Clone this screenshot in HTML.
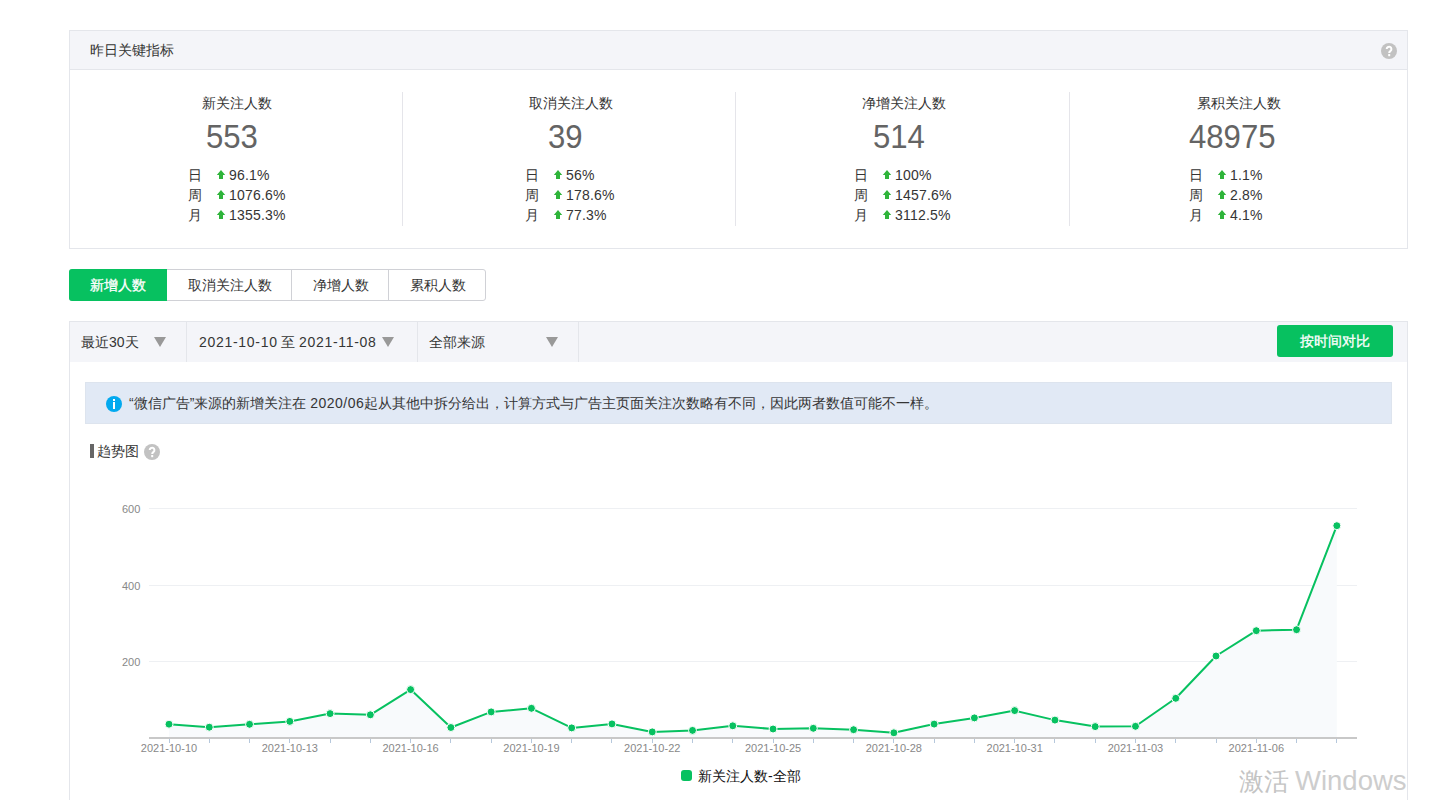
<!DOCTYPE html>
<html><head><meta charset="utf-8">
<style>
html,body{margin:0;padding:0;background:#fff;}
body{width:1437px;height:800px;overflow:hidden;position:relative;font-family:"Liberation Sans",sans-serif;}
.t{position:absolute;white-space:nowrap;}
.abs{position:absolute;}
.arrow{position:absolute;width:10px;height:10px;}
.arrow svg{display:block}
</style></head><body>
<div class="abs" style="left:69px;top:30px;width:1337px;height:217px;border:1px solid #e4e6eb;background:#fff"></div>
<div class="abs" style="left:70px;top:31px;width:1337px;height:38px;background:#f4f5f9;border-bottom:1px solid #e4e6eb;width:1337px"></div>
<div class="t" style="left:90px;top:43px;font-size:14px;line-height:14px;color:#353535;">昨日关键指标</div>
<svg class="abs" style="left:1381px;top:43px" width="16" height="16" viewBox="0 0 16 16"><circle cx="8" cy="8" r="8" fill="#c2c2c2"/><path d="M5.7 6.1 A2.35 2.35 0 1 1 9.5 7.9 C8.5 8.6 8.2 9 8.2 10" fill="none" stroke="#fff" stroke-width="2"/><rect x="7.2" y="11" width="2" height="2.2" fill="#fff"/></svg>
<div class="abs" style="left:402px;top:92px;width:1px;height:134px;background:#e5e5ea"></div>
<div class="abs" style="left:735px;top:92px;width:1px;height:134px;background:#e5e5ea"></div>
<div class="abs" style="left:1069px;top:92px;width:1px;height:134px;background:#e5e5ea"></div>
<div class="t" style="left:202px;top:96px;font-size:14px;line-height:14px;color:#353535;">新关注人数</div>
<div class="t" style="left:206px;top:119px;font-size:34px;line-height:34px;color:#646464;transform:scaleX(0.915);transform-origin:0 0">553</div>
<div class="t" style="left:188px;top:168px;font-size:14px;line-height:14px;color:#353535;">日</div>
<div class="arrow" style="left:216px;top:170px"><svg width="10" height="10" viewBox="0 0 10 10"><path d="M5 0 L9.2 4.9 L7 4.9 L7 9 L3 9 L3 4.9 L0.8 4.9 Z" fill="#2fb43a"/></svg></div>
<div class="t" style="left:229px;top:168px;font-size:14px;line-height:14px;color:#353535;letter-spacing:0.2px">96.1%</div>
<div class="t" style="left:188px;top:188px;font-size:14px;line-height:14px;color:#353535;">周</div>
<div class="arrow" style="left:216px;top:190px"><svg width="10" height="10" viewBox="0 0 10 10"><path d="M5 0 L9.2 4.9 L7 4.9 L7 9 L3 9 L3 4.9 L0.8 4.9 Z" fill="#2fb43a"/></svg></div>
<div class="t" style="left:229px;top:188px;font-size:14px;line-height:14px;color:#353535;letter-spacing:0.2px">1076.6%</div>
<div class="t" style="left:188px;top:208px;font-size:14px;line-height:14px;color:#353535;">月</div>
<div class="arrow" style="left:216px;top:210px"><svg width="10" height="10" viewBox="0 0 10 10"><path d="M5 0 L9.2 4.9 L7 4.9 L7 9 L3 9 L3 4.9 L0.8 4.9 Z" fill="#2fb43a"/></svg></div>
<div class="t" style="left:229px;top:208px;font-size:14px;line-height:14px;color:#353535;letter-spacing:0.2px">1355.3%</div>
<div class="t" style="left:529px;top:96px;font-size:14px;line-height:14px;color:#353535;">取消关注人数</div>
<div class="t" style="left:548px;top:119px;font-size:34px;line-height:34px;color:#646464;transform:scaleX(0.915);transform-origin:0 0">39</div>
<div class="t" style="left:525px;top:168px;font-size:14px;line-height:14px;color:#353535;">日</div>
<div class="arrow" style="left:553px;top:170px"><svg width="10" height="10" viewBox="0 0 10 10"><path d="M5 0 L9.2 4.9 L7 4.9 L7 9 L3 9 L3 4.9 L0.8 4.9 Z" fill="#2fb43a"/></svg></div>
<div class="t" style="left:566px;top:168px;font-size:14px;line-height:14px;color:#353535;letter-spacing:0.2px">56%</div>
<div class="t" style="left:525px;top:188px;font-size:14px;line-height:14px;color:#353535;">周</div>
<div class="arrow" style="left:553px;top:190px"><svg width="10" height="10" viewBox="0 0 10 10"><path d="M5 0 L9.2 4.9 L7 4.9 L7 9 L3 9 L3 4.9 L0.8 4.9 Z" fill="#2fb43a"/></svg></div>
<div class="t" style="left:566px;top:188px;font-size:14px;line-height:14px;color:#353535;letter-spacing:0.2px">178.6%</div>
<div class="t" style="left:525px;top:208px;font-size:14px;line-height:14px;color:#353535;">月</div>
<div class="arrow" style="left:553px;top:210px"><svg width="10" height="10" viewBox="0 0 10 10"><path d="M5 0 L9.2 4.9 L7 4.9 L7 9 L3 9 L3 4.9 L0.8 4.9 Z" fill="#2fb43a"/></svg></div>
<div class="t" style="left:566px;top:208px;font-size:14px;line-height:14px;color:#353535;letter-spacing:0.2px">77.3%</div>
<div class="t" style="left:862px;top:96px;font-size:14px;line-height:14px;color:#353535;">净增关注人数</div>
<div class="t" style="left:873px;top:119px;font-size:34px;line-height:34px;color:#646464;transform:scaleX(0.915);transform-origin:0 0">514</div>
<div class="t" style="left:854px;top:168px;font-size:14px;line-height:14px;color:#353535;">日</div>
<div class="arrow" style="left:882px;top:170px"><svg width="10" height="10" viewBox="0 0 10 10"><path d="M5 0 L9.2 4.9 L7 4.9 L7 9 L3 9 L3 4.9 L0.8 4.9 Z" fill="#2fb43a"/></svg></div>
<div class="t" style="left:895px;top:168px;font-size:14px;line-height:14px;color:#353535;letter-spacing:0.2px">100%</div>
<div class="t" style="left:854px;top:188px;font-size:14px;line-height:14px;color:#353535;">周</div>
<div class="arrow" style="left:882px;top:190px"><svg width="10" height="10" viewBox="0 0 10 10"><path d="M5 0 L9.2 4.9 L7 4.9 L7 9 L3 9 L3 4.9 L0.8 4.9 Z" fill="#2fb43a"/></svg></div>
<div class="t" style="left:895px;top:188px;font-size:14px;line-height:14px;color:#353535;letter-spacing:0.2px">1457.6%</div>
<div class="t" style="left:854px;top:208px;font-size:14px;line-height:14px;color:#353535;">月</div>
<div class="arrow" style="left:882px;top:210px"><svg width="10" height="10" viewBox="0 0 10 10"><path d="M5 0 L9.2 4.9 L7 4.9 L7 9 L3 9 L3 4.9 L0.8 4.9 Z" fill="#2fb43a"/></svg></div>
<div class="t" style="left:895px;top:208px;font-size:14px;line-height:14px;color:#353535;letter-spacing:0.2px">3112.5%</div>
<div class="t" style="left:1197px;top:96px;font-size:14px;line-height:14px;color:#353535;">累积关注人数</div>
<div class="t" style="left:1189px;top:119px;font-size:34px;line-height:34px;color:#646464;transform:scaleX(0.915);transform-origin:0 0">48975</div>
<div class="t" style="left:1189px;top:168px;font-size:14px;line-height:14px;color:#353535;">日</div>
<div class="arrow" style="left:1217px;top:170px"><svg width="10" height="10" viewBox="0 0 10 10"><path d="M5 0 L9.2 4.9 L7 4.9 L7 9 L3 9 L3 4.9 L0.8 4.9 Z" fill="#2fb43a"/></svg></div>
<div class="t" style="left:1230px;top:168px;font-size:14px;line-height:14px;color:#353535;letter-spacing:0.2px">1.1%</div>
<div class="t" style="left:1189px;top:188px;font-size:14px;line-height:14px;color:#353535;">周</div>
<div class="arrow" style="left:1217px;top:190px"><svg width="10" height="10" viewBox="0 0 10 10"><path d="M5 0 L9.2 4.9 L7 4.9 L7 9 L3 9 L3 4.9 L0.8 4.9 Z" fill="#2fb43a"/></svg></div>
<div class="t" style="left:1230px;top:188px;font-size:14px;line-height:14px;color:#353535;letter-spacing:0.2px">2.8%</div>
<div class="t" style="left:1189px;top:208px;font-size:14px;line-height:14px;color:#353535;">月</div>
<div class="arrow" style="left:1217px;top:210px"><svg width="10" height="10" viewBox="0 0 10 10"><path d="M5 0 L9.2 4.9 L7 4.9 L7 9 L3 9 L3 4.9 L0.8 4.9 Z" fill="#2fb43a"/></svg></div>
<div class="t" style="left:1230px;top:208px;font-size:14px;line-height:14px;color:#353535;letter-spacing:0.2px">4.1%</div>
<div class="abs" style="left:69px;top:269px;width:415px;height:30px;border:1px solid #d0d1d6;border-radius:3px;background:#fff"></div>
<div class="abs" style="left:69px;top:269px;width:98px;height:32px;background:#07c160;border-radius:3px 0 0 3px"></div>
<div class="abs" style="left:291px;top:270px;width:1px;height:30px;background:#d0d1d6"></div>
<div class="abs" style="left:388px;top:270px;width:1px;height:30px;background:#d0d1d6"></div>
<div class="t" style="left:90px;top:278px;font-size:14px;line-height:14px;color:#fff;-webkit-text-stroke:0.3px #fff">新增人数</div>
<div class="t" style="left:188px;top:278px;font-size:14px;line-height:14px;color:#353535;">取消关注人数</div>
<div class="t" style="left:313px;top:278px;font-size:14px;line-height:14px;color:#353535;">净增人数</div>
<div class="t" style="left:410px;top:278px;font-size:14px;line-height:14px;color:#353535;">累积人数</div>
<div class="abs" style="left:69px;top:321px;width:1337px;height:500px;border:1px solid #e4e6eb;background:#fff"></div>
<div class="abs" style="left:70px;top:322px;width:1337px;height:40px;background:#f4f5f9"></div>
<div class="abs" style="left:186px;top:322px;width:1px;height:40px;background:#e4e6eb"></div>
<div class="abs" style="left:417px;top:322px;width:1px;height:40px;background:#e4e6eb"></div>
<div class="abs" style="left:578px;top:322px;width:1px;height:40px;background:#e4e6eb"></div>
<div class="t" style="left:81px;top:335px;font-size:14px;line-height:14px;color:#353535;">最近30天</div>
<div class="abs" style="left:154px;top:337px;width:0;height:0;border-left:6px solid transparent;border-right:6px solid transparent;border-top:10px solid #999"></div>
<div class="t" style="left:199px;top:335px;font-size:14px;line-height:14px;color:#353535;letter-spacing:0.7px">2021-10-10</div>
<div class="t" style="left:281px;top:335px;font-size:14px;line-height:14px;color:#353535;">至</div>
<div class="t" style="left:299px;top:335px;font-size:14px;line-height:14px;color:#353535;letter-spacing:0.7px">2021-11-08</div>
<div class="abs" style="left:382px;top:337px;width:0;height:0;border-left:6px solid transparent;border-right:6px solid transparent;border-top:10px solid #999"></div>
<div class="t" style="left:429px;top:335px;font-size:14px;line-height:14px;color:#353535;">全部来源</div>
<div class="abs" style="left:546px;top:337px;width:0;height:0;border-left:6px solid transparent;border-right:6px solid transparent;border-top:10px solid #999"></div>
<div class="abs" style="left:1277px;top:325px;width:116px;height:32px;background:#07c160;border-radius:3px"></div>
<div class="t" style="left:1300px;top:334px;font-size:14px;line-height:14px;color:#fff;-webkit-text-stroke:0.3px #fff">按时间对比</div>
<div class="abs" style="left:85px;top:382px;width:1305px;height:40px;background:#e1e9f5;border:1px solid #dde4ee"></div>
<div class="abs" style="left:106px;top:396px;width:16px;height:16px;border-radius:50%;background:#02a9ef"></div>
<div class="abs" style="left:113px;top:402px;width:2px;height:7px;background:#fff"></div>
<div class="abs" style="left:113px;top:399px;width:2px;height:2px;background:#fff"></div>
<div class="t" style="left:129px;top:396px;font-size:14px;line-height:14px;color:#353535;">“微信广告”来源的新增关注在 <span style="letter-spacing:0.5px">2020/06</span>起从其他中拆分给出，计算方式与广告主页面关注次数略有不同，因此两者数值可能不一样。</div>
<div class="abs" style="left:90px;top:444px;width:4px;height:14px;background:#666"></div>
<div class="t" style="left:97px;top:444px;font-size:14px;line-height:14px;color:#353535;">趋势图</div>
<svg class="abs" style="left:144px;top:444px" width="16" height="16" viewBox="0 0 16 16"><circle cx="8" cy="8" r="8" fill="#c2c2c2"/><path d="M5.7 6.1 A2.35 2.35 0 1 1 9.5 7.9 C8.5 8.6 8.2 9 8.2 10" fill="none" stroke="#fff" stroke-width="2"/><rect x="7.2" y="11" width="2" height="2.2" fill="#fff"/></svg>
<svg class="abs" style="left:0;top:0" width="1437" height="800" viewBox="0 0 1437 800"><line x1="149" y1="508.5" x2="1357" y2="508.5" stroke="#eef0f3" stroke-width="1"/><line x1="149" y1="585.5" x2="1357" y2="585.5" stroke="#eef0f3" stroke-width="1"/><line x1="149" y1="661.5" x2="1357" y2="661.5" stroke="#eef0f3" stroke-width="1"/><polygon points="169.00,738 169.00,724.20 209.27,727.20 249.54,724.30 289.81,721.40 330.08,713.60 370.35,714.80 410.62,689.60 450.89,727.50 491.16,711.90 531.43,708.30 571.70,727.90 611.97,723.90 652.24,731.90 692.51,730.40 732.78,725.80 773.05,729.00 813.32,728.30 853.59,729.70 893.86,732.80 934.13,724.10 974.40,717.90 1014.67,710.60 1054.94,720.10 1095.21,726.60 1135.48,726.30 1175.75,698.30 1216.02,656.00 1256.29,630.70 1296.56,629.70 1336.83,525.70 1336.83,738" fill="#f8fafc"/><line x1="149" y1="738" x2="1357" y2="738" stroke="#c8c8c8" stroke-width="2"/><line x1="169.5" y1="739" x2="169.5" y2="743" stroke="#b6c8dc" stroke-width="1"/><line x1="209.5" y1="739" x2="209.5" y2="743" stroke="#b6c8dc" stroke-width="1"/><line x1="249.5" y1="739" x2="249.5" y2="743" stroke="#b6c8dc" stroke-width="1"/><line x1="289.5" y1="739" x2="289.5" y2="743" stroke="#b6c8dc" stroke-width="1"/><line x1="330.5" y1="739" x2="330.5" y2="743" stroke="#b6c8dc" stroke-width="1"/><line x1="370.5" y1="739" x2="370.5" y2="743" stroke="#b6c8dc" stroke-width="1"/><line x1="410.5" y1="739" x2="410.5" y2="743" stroke="#b6c8dc" stroke-width="1"/><line x1="450.5" y1="739" x2="450.5" y2="743" stroke="#b6c8dc" stroke-width="1"/><line x1="491.5" y1="739" x2="491.5" y2="743" stroke="#b6c8dc" stroke-width="1"/><line x1="531.5" y1="739" x2="531.5" y2="743" stroke="#b6c8dc" stroke-width="1"/><line x1="571.5" y1="739" x2="571.5" y2="743" stroke="#b6c8dc" stroke-width="1"/><line x1="611.5" y1="739" x2="611.5" y2="743" stroke="#b6c8dc" stroke-width="1"/><line x1="652.5" y1="739" x2="652.5" y2="743" stroke="#b6c8dc" stroke-width="1"/><line x1="692.5" y1="739" x2="692.5" y2="743" stroke="#b6c8dc" stroke-width="1"/><line x1="732.5" y1="739" x2="732.5" y2="743" stroke="#b6c8dc" stroke-width="1"/><line x1="773.5" y1="739" x2="773.5" y2="743" stroke="#b6c8dc" stroke-width="1"/><line x1="813.5" y1="739" x2="813.5" y2="743" stroke="#b6c8dc" stroke-width="1"/><line x1="853.5" y1="739" x2="853.5" y2="743" stroke="#b6c8dc" stroke-width="1"/><line x1="893.5" y1="739" x2="893.5" y2="743" stroke="#b6c8dc" stroke-width="1"/><line x1="934.5" y1="739" x2="934.5" y2="743" stroke="#b6c8dc" stroke-width="1"/><line x1="974.5" y1="739" x2="974.5" y2="743" stroke="#b6c8dc" stroke-width="1"/><line x1="1014.5" y1="739" x2="1014.5" y2="743" stroke="#b6c8dc" stroke-width="1"/><line x1="1054.5" y1="739" x2="1054.5" y2="743" stroke="#b6c8dc" stroke-width="1"/><line x1="1095.5" y1="739" x2="1095.5" y2="743" stroke="#b6c8dc" stroke-width="1"/><line x1="1135.5" y1="739" x2="1135.5" y2="743" stroke="#b6c8dc" stroke-width="1"/><line x1="1175.5" y1="739" x2="1175.5" y2="743" stroke="#b6c8dc" stroke-width="1"/><line x1="1216.5" y1="739" x2="1216.5" y2="743" stroke="#b6c8dc" stroke-width="1"/><line x1="1256.5" y1="739" x2="1256.5" y2="743" stroke="#b6c8dc" stroke-width="1"/><line x1="1296.5" y1="739" x2="1296.5" y2="743" stroke="#b6c8dc" stroke-width="1"/><line x1="1336.5" y1="739" x2="1336.5" y2="743" stroke="#b6c8dc" stroke-width="1"/><polyline points="169.00,724.20 209.27,727.20 249.54,724.30 289.81,721.40 330.08,713.60 370.35,714.80 410.62,689.60 450.89,727.50 491.16,711.90 531.43,708.30 571.70,727.90 611.97,723.90 652.24,731.90 692.51,730.40 732.78,725.80 773.05,729.00 813.32,728.30 853.59,729.70 893.86,732.80 934.13,724.10 974.40,717.90 1014.67,710.60 1054.94,720.10 1095.21,726.60 1135.48,726.30 1175.75,698.30 1216.02,656.00 1256.29,630.70 1296.56,629.70 1336.83,525.70" fill="none" stroke="#07c160" stroke-width="2" stroke-linejoin="round"/><circle cx="169.00" cy="724.20" r="4" fill="#07c160" stroke="#fff" stroke-width="1"/><circle cx="209.27" cy="727.20" r="4" fill="#07c160" stroke="#fff" stroke-width="1"/><circle cx="249.54" cy="724.30" r="4" fill="#07c160" stroke="#fff" stroke-width="1"/><circle cx="289.81" cy="721.40" r="4" fill="#07c160" stroke="#fff" stroke-width="1"/><circle cx="330.08" cy="713.60" r="4" fill="#07c160" stroke="#fff" stroke-width="1"/><circle cx="370.35" cy="714.80" r="4" fill="#07c160" stroke="#fff" stroke-width="1"/><circle cx="410.62" cy="689.60" r="4" fill="#07c160" stroke="#fff" stroke-width="1"/><circle cx="450.89" cy="727.50" r="4" fill="#07c160" stroke="#fff" stroke-width="1"/><circle cx="491.16" cy="711.90" r="4" fill="#07c160" stroke="#fff" stroke-width="1"/><circle cx="531.43" cy="708.30" r="4" fill="#07c160" stroke="#fff" stroke-width="1"/><circle cx="571.70" cy="727.90" r="4" fill="#07c160" stroke="#fff" stroke-width="1"/><circle cx="611.97" cy="723.90" r="4" fill="#07c160" stroke="#fff" stroke-width="1"/><circle cx="652.24" cy="731.90" r="4" fill="#07c160" stroke="#fff" stroke-width="1"/><circle cx="692.51" cy="730.40" r="4" fill="#07c160" stroke="#fff" stroke-width="1"/><circle cx="732.78" cy="725.80" r="4" fill="#07c160" stroke="#fff" stroke-width="1"/><circle cx="773.05" cy="729.00" r="4" fill="#07c160" stroke="#fff" stroke-width="1"/><circle cx="813.32" cy="728.30" r="4" fill="#07c160" stroke="#fff" stroke-width="1"/><circle cx="853.59" cy="729.70" r="4" fill="#07c160" stroke="#fff" stroke-width="1"/><circle cx="893.86" cy="732.80" r="4" fill="#07c160" stroke="#fff" stroke-width="1"/><circle cx="934.13" cy="724.10" r="4" fill="#07c160" stroke="#fff" stroke-width="1"/><circle cx="974.40" cy="717.90" r="4" fill="#07c160" stroke="#fff" stroke-width="1"/><circle cx="1014.67" cy="710.60" r="4" fill="#07c160" stroke="#fff" stroke-width="1"/><circle cx="1054.94" cy="720.10" r="4" fill="#07c160" stroke="#fff" stroke-width="1"/><circle cx="1095.21" cy="726.60" r="4" fill="#07c160" stroke="#fff" stroke-width="1"/><circle cx="1135.48" cy="726.30" r="4" fill="#07c160" stroke="#fff" stroke-width="1"/><circle cx="1175.75" cy="698.30" r="4" fill="#07c160" stroke="#fff" stroke-width="1"/><circle cx="1216.02" cy="656.00" r="4" fill="#07c160" stroke="#fff" stroke-width="1"/><circle cx="1256.29" cy="630.70" r="4" fill="#07c160" stroke="#fff" stroke-width="1"/><circle cx="1296.56" cy="629.70" r="4" fill="#07c160" stroke="#fff" stroke-width="1"/><circle cx="1336.83" cy="525.70" r="4" fill="#07c160" stroke="#fff" stroke-width="1"/></svg>
<div class="t" style="left:122px;top:503.5px;font-size:11px;line-height:11px;color:#888;">600</div>
<div class="t" style="left:122px;top:580.5px;font-size:11px;line-height:11px;color:#888;">400</div>
<div class="t" style="left:122px;top:656.5px;font-size:11px;line-height:11px;color:#888;">200</div>
<div class="t" style="left:129.00px;width:80px;text-align:center;top:743px;font-size:11px;line-height:11px;color:#888">2021-10-10</div>
<div class="t" style="left:249.81px;width:80px;text-align:center;top:743px;font-size:11px;line-height:11px;color:#888">2021-10-13</div>
<div class="t" style="left:370.62px;width:80px;text-align:center;top:743px;font-size:11px;line-height:11px;color:#888">2021-10-16</div>
<div class="t" style="left:491.43px;width:80px;text-align:center;top:743px;font-size:11px;line-height:11px;color:#888">2021-10-19</div>
<div class="t" style="left:612.24px;width:80px;text-align:center;top:743px;font-size:11px;line-height:11px;color:#888">2021-10-22</div>
<div class="t" style="left:733.05px;width:80px;text-align:center;top:743px;font-size:11px;line-height:11px;color:#888">2021-10-25</div>
<div class="t" style="left:853.86px;width:80px;text-align:center;top:743px;font-size:11px;line-height:11px;color:#888">2021-10-28</div>
<div class="t" style="left:974.67px;width:80px;text-align:center;top:743px;font-size:11px;line-height:11px;color:#888">2021-10-31</div>
<div class="t" style="left:1095.48px;width:80px;text-align:center;top:743px;font-size:11px;line-height:11px;color:#888">2021-11-03</div>
<div class="t" style="left:1216.29px;width:80px;text-align:center;top:743px;font-size:11px;line-height:11px;color:#888">2021-11-06</div>
<div class="abs" style="left:681px;top:770px;width:11px;height:11px;border-radius:3px;background:#07c160"></div>
<div class="t" style="left:698px;top:769px;font-size:14px;line-height:14px;color:#111;">新关注人数-全部</div>
<div class="t" style="left:1239px;top:769px;font-size:25px;line-height:25px;color:#c4c4c4;">激活</div>
<div class="t" style="left:1295px;top:767px;font-size:27.5px;line-height:27.5px;color:#cdcdcd;">Windows</div>
</body></html>
